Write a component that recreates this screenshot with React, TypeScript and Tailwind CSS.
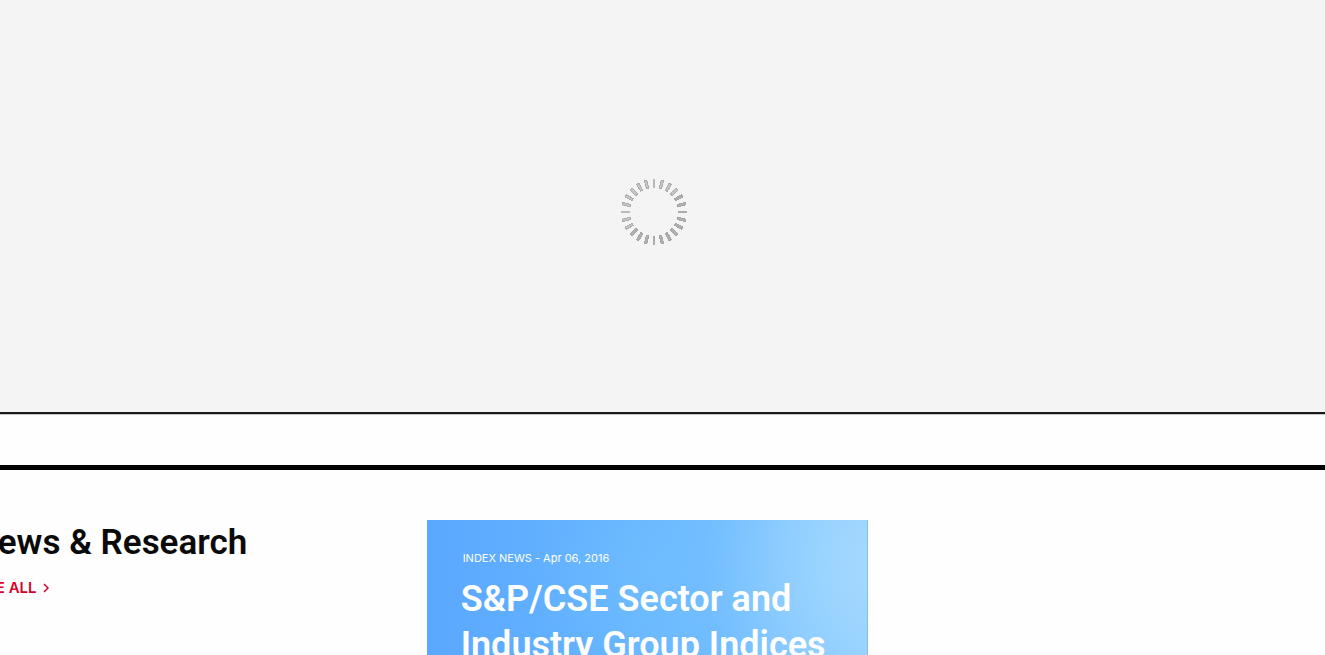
const TICKS = Array.from({ length: 24 }, (_, i) => i);

function Tick({ index }: { index: number }) {
  const straight = index % 6 === 0;
  const dark = index >= 4 && index <= 15;
  return (
    <g transform={`rotate(${index * 15})`} shapeRendering="crispEdges">
      <line
        y1="-24"
        y2="-33"
        stroke={straight ? (dark ? '#adadad' : '#bababa') : dark ? '#a6a6a6' : '#adadad'}
        strokeWidth={straight ? 2 : 3.4}
      />
      {!straight && <line y1="-25" y2="-32" stroke={dark ? '#b0b0b0' : '#c6c6c6'} strokeWidth="1.5" />}
    </g>
  );
}

function Spinner() {
  return (
    <svg width="68" height="68" viewBox="-34 -34 68 68" role="img" aria-label="Loading">
      {TICKS.map((i) => (
        <Tick key={i} index={i} />
      ))}
    </svg>
  );
}

function FeaturedCard() {
  return (
    <article className="h-80 border-r border-[#8abde6] bg-[radial-gradient(circle_at_50%_16%,#78c4ff60,transparent_35%),radial-gradient(circle_at_104%_14%,#a6daff,transparent_34%),linear-gradient(90deg,#5aa8ff_0%,#64b3ff_40%,#76c0ff_75%,#8ccbff_100%)] pt-8 pl-[34px] text-white">
      <p className="pl-0.5 font-['Inter',sans-serif] text-[11px] leading-[13px]">INDEX NEWS - Apr 06, 2016</p>
      <h3 className="mt-[11px] text-[36px] leading-[46px] font-semibold">
        <a href="#sector-indices">
          S&amp;P/CSE Sector and
          <br />
          Industry Group Indices
        </a>
      </h3>
    </article>
  );
}

export default function App() {
  return (
    <main className="h-screen overflow-hidden bg-[#fefefe] font-['Roboto',sans-serif] text-[#0a0a0a]">
      <section className="flex h-[414px] items-center justify-center border-b-2 border-[#1a1a1a] bg-[#f4f4f4] pt-3 pr-[17px] shadow-[0_1px_0_#c4c4c4]">
        <Spinner />
      </section>
      <section className="mt-[51px] border-t-5 border-black pt-[50px]">
        <div className="-ml-[15px] grid w-full grid-cols-3">
          <header className="-ml-3 whitespace-nowrap">
            <h2 className="text-[35px] leading-[46px] font-semibold">News &amp; Research</h2>
            <a
              href="#all-research"
              className="mt-3 ml-1 flex items-center gap-1.5 font-['Inter',sans-serif] text-[15px] leading-5 font-semibold text-[#d6002a]"
            >
              SEE ALL
              <svg width="6" height="10" viewBox="0 0 6 10" fill="none" stroke="currentColor" strokeWidth="1.5" aria-hidden="true">
                <path d="M1 1l4 4-4 4" />
              </svg>
            </a>
          </header>
          <FeaturedCard />
        </div>
      </section>
    </main>
  );
}
